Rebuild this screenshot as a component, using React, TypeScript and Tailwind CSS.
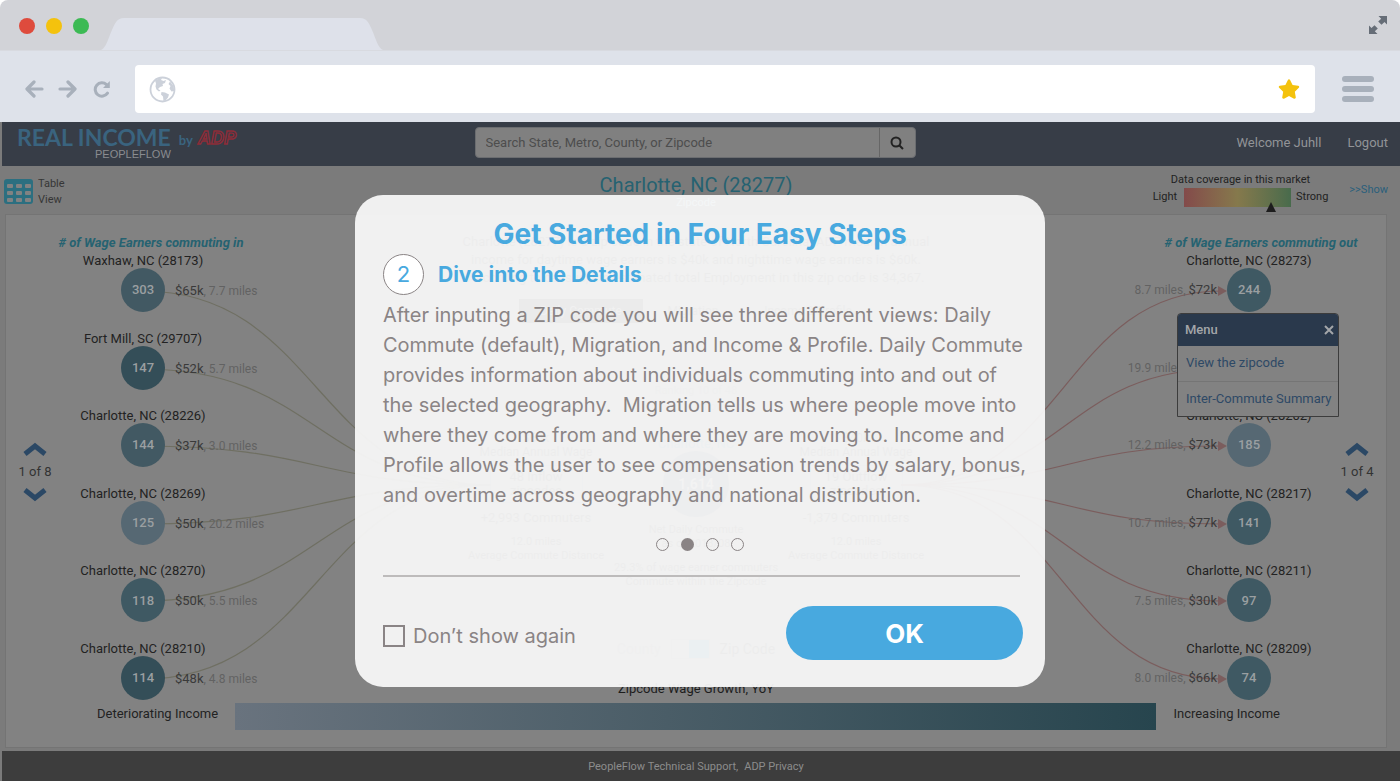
import { useState } from "react";
import type { ReactNode } from "react";
import { FaStar } from "react-icons/fa";

interface Flow {
  place: string;
  count: number;
  pay: string;
  miles: string;
  fill: string;
}

const inflow: Flow[] = [
  { place: "Waxhaw, NC (28173)", count: 303, pay: "$65k", miles: "7.7 miles", fill: "bg-[#425963]" },
  { place: "Fort Mill, SC (29707)", count: 147, pay: "$52k", miles: "5.7 miles", fill: "bg-[#344e58]" },
  { place: "Charlotte, NC (28226)", count: 144, pay: "$37k", miles: "3.0 miles", fill: "bg-[#425963]" },
  { place: "Charlotte, NC (28269)", count: 125, pay: "$50k", miles: "20.2 miles", fill: "bg-[#566873]" },
  { place: "Charlotte, NC (28270)", count: 118, pay: "$50k", miles: "5.5 miles", fill: "bg-[#3f5963]" },
  { place: "Charlotte, NC (28210)", count: 114, pay: "$48k", miles: "4.8 miles", fill: "bg-[#344e58]" },
];

const outflow: Flow[] = [
  { place: "Charlotte, NC (28273)", count: 244, pay: "$72k", miles: "8.7 miles", fill: "bg-[#3f5963]" },
  { place: "Charlotte, NC (28205)", count: 201, pay: "$61k", miles: "19.9 miles", fill: "bg-[#425963]" },
  { place: "Charlotte, NC (28202)", count: 185, pay: "$73k", miles: "12.2 miles", fill: "bg-[#566873]" },
  { place: "Charlotte, NC (28217)", count: 141, pay: "$77k", miles: "10.7 miles", fill: "bg-[#3f5963]" },
  { place: "Charlotte, NC (28211)", count: 97, pay: "$30k", miles: "7.5 miles", fill: "bg-[#3f5963]" },
  { place: "Charlotte, NC (28209)", count: 74, pay: "$66k", miles: "8.0 miles", fill: "bg-[#3f5963]" },
];

const rowY = [36, 114, 191, 269, 346, 424];
const hubY = 230;

const steps = ["Search", "Dive into the Details", "Compare", "Share"];

const bodyLines = [
  "After inputing a ZIP code you will see three different views: Daily",
  "Commute (default), Migration, and Income & Profile. Daily Commute",
  "provides information about individuals commuting into and out of",
  "the selected geography.  Migration tells us where people move into",
  "where they come from and where they are moving to. Income and",
  "Profile allows the user to see compensation trends by salary, bonus,",
  "and overtime across geography and national distribution.",
];

function BrowserChrome() {
  return (
    <div className="bg-white">
      <div className="flex h-[51px] items-center rounded-t-lg border-b border-[#d8dae0] bg-[#d2d3d8] pl-[19px] pr-3">
        <div className="flex gap-[11px] pt-px">
          <span className="size-4 rounded-full bg-[#de4b3d]" />
          <span className="size-4 rounded-full bg-[#f4c20d]" />
          <span className="size-4 rounded-full bg-[#3cba54]" />
        </div>
        <svg className="ml-3 self-end" width="282" height="32" viewBox="0 0 282 32">
          <path d="M0 32 C5 30 7 21 11 12 C14 5 16 0 23 0 L259 0 C266 0 268 5 271 12 C275 21 277 30 282 32 Z" fill="#dee1ea" />
        </svg>
        <button aria-label="Full screen" className="ml-auto">
          <svg width="20" height="20" viewBox="0 0 20 20" fill="#666d77">
            <path d="M10.500 1 H19 V9.500 L16.500 7 L13.500 9.800 L10.200 6.600 L13.200 3.700 Z" />
            <path d="M9.500 19 H1 V10.500 L3.500 13 L6.500 10.200 L9.800 13.400 L6.800 16.300 Z" />
          </svg>
        </button>
      </div>
      <div className="flex h-[71px] items-center bg-[#dee2ea] pb-[9px] pl-[25px] pr-[26px] pt-[14px]">
        <div className="flex items-center gap-3.5 text-[#a8b0bb]">
          <button aria-label="Back">
            <svg width="19" height="18" viewBox="0 0 19 18" fill="none" stroke="currentColor" strokeWidth="3.200" strokeLinecap="round" strokeLinejoin="round">
              <path d="M17 9 H2.500 M9 2 L2 9 L9 16" />
            </svg>
          </button>
          <button aria-label="Forward">
            <svg width="19" height="18" viewBox="0 0 19 18" fill="none" stroke="currentColor" strokeWidth="3.200" strokeLinecap="round" strokeLinejoin="round">
              <path d="M2 9 H16.500 M10 2 L17 9 L10 16" />
            </svg>
          </button>
          <button aria-label="Reload" className="ml-0.5">
            <svg width="18" height="18" viewBox="0 0 18 18" fill="none" stroke="currentColor" strokeWidth="3" strokeLinecap="round">
              <path d="M13.500 4.600 A6.700 6.700 0 1 0 14.500 13.200" />
              <path d="M16.800 1 V8 H10 Z" fill="currentColor" stroke="none" />
            </svg>
          </button>
        </div>
        <div className="ml-6 flex h-12 flex-1 items-center rounded bg-white pl-3.5 pr-[15px]">
          <svg width="27" height="27" viewBox="0 0 27 27" className="shrink-0">
            <circle cx="13.500" cy="13.500" r="12" fill="#fff" stroke="#ccd1da" strokeWidth="1.800" />
            <path d="M6 4.500 L10 2.500 L13 2 L12 4 L14.500 5 L17 4 L16 7 L13.500 8 L14 10 L11 11 L9 13 L11.500 14.500 L10 15.500 L7.500 13.500 L6.500 10.500 L7 7.500 Z" fill="#ccd1da" />
            <path d="M12.500 16 L16 16.500 L20 18.500 L19 21.500 L16.500 24.500 L14.500 25 L14 20.500 L12 18.500 Z" fill="#ccd1da" />
            <path d="M21 5.500 L24.500 10 L25.300 15 L22.500 15.500 L20.500 12.500 L21.500 10 L19.500 8 Z" fill="#ccd1da" />
          </svg>
          <input aria-label="Address" className="h-full min-w-0 flex-1 px-3 text-[16px] outline-none" />
          <button aria-label="Bookmark" className="text-[#f4c20d]">
            <FaStar size={22} />
          </button>
        </div>
        <button aria-label="Browser menu" className="ml-[27px] flex w-8 flex-col gap-1">
          <span className="h-1.5 rounded-full bg-[#a8b0bb]" />
          <span className="h-1.5 rounded-full bg-[#a8b0bb]" />
          <span className="h-1.5 rounded-full bg-[#a8b0bb]" />
        </button>
      </div>
    </div>
  );
}

function SiteHeader() {
  return (
    <header className="flex h-11 items-center bg-[#373d47] pb-[3px] pr-3">
      <div className="flex-1">
        <div className="flex items-start pl-[15px]">
          <div className="flex flex-col items-end">
            <span className="font-['Lato'] text-[23px] font-bold leading-[22px] text-[#3a647f]">REAL INCOME</span>
            <span className="font-['Liberation_Sans'] text-[11px] leading-3 text-[#8a8c90]">PEOPLEFLOW</span>
          </div>
          <span className="ml-2 mt-1 font-['Lato'] text-[13px] font-bold leading-5 text-[#3a647f]">by</span>
          <svg className="ml-1" width="42" height="22" viewBox="0 0 42 22">
            <text x="1" y="18" fontFamily="Liberation Sans" fontSize="18" fontWeight="700" fontStyle="italic" fill="#373d47" stroke="#8c2c38" strokeWidth="1.400">ADP</text>
          </svg>
        </div>
      </div>
      <form className="flex h-[31px] w-[441px] rounded border border-[#6b6d70] bg-[#808080]" onSubmit={(e) => e.preventDefault()}>
        <input
          aria-label="Search"
          placeholder="Search State, Metro, County, or Zipcode"
          className="min-w-0 flex-1 bg-transparent px-2.5 text-[13px] text-[#222] outline-none placeholder:text-[#4d4d4d]"
        />
        <button aria-label="Run search" className="flex w-9 items-center justify-center border-l border-[#666]">
          <svg width="14" height="14" viewBox="0 0 14 14" fill="none" stroke="#222" strokeWidth="2">
            <circle cx="6" cy="6" r="4.500" />
            <path d="M9.200 9.200 L13 13" />
          </svg>
        </button>
      </form>
      <div className="flex flex-1 justify-end gap-[26px] text-[13px] text-[#929497]">
        <span>Welcome Juhll</span>
        <a href="#logout">Logout</a>
      </div>
    </header>
  );
}

function SubHeader() {
  return (
    <div className="flex h-12 pl-0.5 pr-3">
      <div className="flex flex-1 items-center gap-[5px] pt-1">
        <svg width="29" height="26" viewBox="0 0 29 26">
          <rect width="29" height="25" rx="3" fill="#2c6f80" />
          <g fill="#828282">
            <rect x="3" y="5" width="6" height="4" rx="1" />
            <rect x="12" y="5" width="6" height="4" rx="1" />
            <rect x="21" y="5" width="6" height="4" rx="1" />
            <rect x="3" y="12" width="6" height="4" rx="1" />
            <rect x="12" y="12" width="6" height="4" rx="1" />
            <rect x="21" y="12" width="6" height="4" rx="1" />
            <rect x="3" y="19" width="6" height="4" rx="1" />
            <rect x="12" y="19" width="6" height="4" rx="1" />
            <rect x="21" y="19" width="6" height="4" rx="1" />
          </g>
        </svg>
        <a href="#table" className="w-8 text-[11px] leading-4 text-[#363636]">Table View</a>
      </div>
      <div className="pt-2 text-center">
        <h1 className="text-[20px] leading-[23px] text-[#266271]">Charlotte, NC (28277)</h1>
        <p className="text-[11px] leading-3 text-[#b4dce4]">Zipcode</p>
      </div>
      <div className="flex flex-1 items-center justify-end gap-[21px] text-[11px] text-[#222]">
        <div className="flex flex-col items-center pb-px">
          <span className="leading-4">Data coverage in this market</span>
          <div className="flex items-center gap-[5px]">
            <span className="mr-0.5">Light</span>
            <div className="relative h-[19px] w-[107px] bg-linear-to-r from-[#834a4a] via-[#85794c] to-[#486b4c]">
              <span className="absolute -bottom-[5px] left-[82px] size-0 border-x-5 border-b-10 border-x-transparent border-b-[#1d1d1d]" />
            </div>
            <span>Strong</span>
          </div>
        </div>
        <a href="#show" className="text-[#2a5f7b]">&gt;&gt;Show</a>
      </div>
    </div>
  );
}

function Pager({ label }: { label: string }) {
  return (
    <div className="flex w-[58px] shrink-0 flex-col items-center gap-1.5 pt-[227px] text-[13px] leading-5 text-[#333]">
      <button aria-label="Previous page">
        <svg width="24" height="14" viewBox="0 0 24 14" fill="none" stroke="#2b4865" strokeWidth="5">
          <path d="M2 12 L12 4 L22 12" />
        </svg>
      </button>
      <span className="whitespace-nowrap">{label}</span>
      <button aria-label="Next page">
        <svg width="24" height="14" viewBox="0 0 24 14" fill="none" stroke="#2b4865" strokeWidth="5">
          <path d="M2 2 L12 10 L22 2" />
        </svg>
      </button>
    </div>
  );
}

function FlowNode({ flow, side, children }: { flow: Flow; side: "in" | "out"; children?: ReactNode }) {
  return (
    <li className="relative flex w-full flex-col items-center">
      <span className="whitespace-nowrap text-[13px] leading-[14px] text-[#222]">{flow.place}</span>
      <div className="grid w-full grid-cols-[minmax(0,1fr)_44px_minmax(0,1fr)] items-center">
        <div className="flex justify-end whitespace-nowrap pr-2.5">
          {side === "out" && (
            <span className="text-[12px] text-[#626262]">
              {flow.miles}, <span className="text-[13px] text-[#3a3a3a]">{flow.pay}</span>
            </span>
          )}
        </div>
        <span className={`flex size-11 items-center justify-center rounded-full text-[13px] font-medium text-[#9a9fa1] ${flow.fill}`}>
          {flow.count}
        </span>
        <div className="whitespace-nowrap pl-2.5">
          {side === "in" && (
            <span className="text-[12px] text-[#626262]">
              <span className="text-[13px] text-[#3a3a3a]">{flow.pay}</span>, {flow.miles}
            </span>
          )}
        </div>
      </div>
      {children}
    </li>
  );
}

function NodeMenu() {
  return (
    <div className="absolute -top-[19px] left-[7px] z-10 w-[162px] rounded-t border border-[#3c3c3c] bg-[#828282] text-[13px]">
      <div className="flex h-8 items-center justify-between rounded-t-[3px] bg-[#2a394c] pl-[7px] pr-1 text-[#a3a6a9]">
        <span className="font-medium">Menu</span>
        <button aria-label="Close menu">
          <svg width="10" height="10" viewBox="0 0 10 10" stroke="currentColor" strokeWidth="2">
            <path d="M1 1 L9 9 M9 1 L1 9" />
          </svg>
        </button>
      </div>
      <a href="#zipcode" className="flex h-9 items-center whitespace-nowrap border-b border-[#757575] pl-2 text-[#2e4966]">View the zipcode</a>
      <a href="#summary" className="flex h-[34px] items-center whitespace-nowrap pl-2 text-[#2e4966]">Inter-Commute Summary</a>
    </div>
  );
}

function FlowColumn({ title, flows, side }: { title: string; flows: Flow[]; side: "in" | "out" }) {
  return (
    <section className="relative flex w-[158px] shrink-0 flex-col items-center pt-5">
      {side === "in" ? (
        <svg className="absolute left-[79px] top-10" width="348" height="460" viewBox="0 0 348 460" fill="none" stroke="#6f6f62" strokeWidth="1.200">
          {rowY.map((y) => (
            <path key={y} d={`M0 ${y} C174 ${y} 174 ${hubY} 348 ${hubY}`} />
          ))}
        </svg>
      ) : (
        <svg className="absolute right-[101px] top-10" width="326" height="460" viewBox="0 0 326 460" fill="none" stroke="#7b5d5d" strokeWidth="1.200">
          {rowY.map((y) => (
            <g key={y}>
              <path d={`M0 ${hubY} C163 ${hubY} 163 ${y} 320 ${y}`} />
              <path d={`M317 ${y - 5} L326 ${y} L317 ${y + 5} Z`} fill="#7b5d5d" stroke="none" />
            </g>
          ))}
        </svg>
      )}
      <h2 className={`whitespace-nowrap text-[13px] font-bold italic leading-4 text-[#266271] ${side === "in" ? "pl-4" : "pl-6"}`}>{title}</h2>
      <ul className="relative mt-[3px] flex h-[446px] w-full flex-col justify-between">
        {flows.map((flow, i) => (
          <FlowNode key={flow.place} flow={flow} side={side}>
            {side === "out" && i === 1 && <NodeMenu />}
          </FlowNode>
        ))}
      </ul>
    </section>
  );
}

function FlowStat({ wage, zips, commuters }: { wage: string; zips: string; commuters: string }) {
  return (
    <div className="flex w-40 flex-col items-center whitespace-nowrap text-[12px] leading-[14px]">
      <span>{wage}</span>
      <span>Median Annual Wage</span>
      <span className="mt-1.5 w-[93px] border border-[#6f7c84] py-1 text-center text-[13px]">
        {zips}
        <br />
        zipcodes
      </span>
      <span className="mt-2 text-[13px]">{commuters} Commuters</span>
      <span className="mt-2.5 text-[11px]">12.0 miles</span>
      <span className="text-[11px]">Average Commute Distance</span>
    </div>
  );
}

function Summary() {
  return (
    <section className="flex min-w-0 flex-1 flex-col items-center pb-[3px] pt-[18px] text-center text-[#3a3a3a]">
      <p className="text-[13px] leading-[18px]">
        Charlotte (28277) is a zip code in the state of North Carolina. ADP median annual
        <br />
        income for daytime wage earners is $40k and nighttime wage earners is $60k.
        <br />
        According to census, the estimated total Employment in this zip code is 34,367.
      </p>
      <div className="mt-3 flex h-6 items-stretch text-[12px] leading-6">
        <button className="w-[124px] bg-[#202020] text-[#8c8c8c]">Daily Commute</button>
        <button className="w-[100px]">Migration</button>
        <button className="w-[130px]">Income &amp; Profile</button>
      </div>
      <p className="mt-[60px] text-[11px] leading-4 text-[#6a6a6a]">
        Ranking 10 of 48
        <br />
        Commute inflow rank
      </p>
      <div className="mt-4 flex">
        <FlowStat wage="$60k" zips="48 Inflow" commuters="+2,993" />
        <div className="flex w-40 flex-col items-center whitespace-nowrap text-[11px] leading-[14px]">
          <span className="mt-1.5 text-[13px] text-[#347586]">Charlotte, NC</span>
          <span className="flex size-[66px] items-center justify-center rounded-full bg-[#46566a] text-[14px] font-bold text-[#a0a0a0]">1,614</span>
          <span className="mt-1.5">Net Daily Commute</span>
          <span>as of 2018/08</span>
          <span className="mt-2.5">29.3% of wage earner commuters</span>
          <span>Commute within the Zipcode</span>
        </div>
        <FlowStat wage="$40k" zips="19 Outflow" commuters="-1,379" />
      </div>
      <div className="mt-auto flex h-5 items-center gap-2.5 text-[14px]">
        <span className="text-[#6c6c6c]">County</span>
        <span className="flex h-5 w-[39px] justify-end border border-[#7a7a7a]">
          <span className="w-5 bg-[#277a9b]" />
        </span>
        <span>Zip Code</span>
      </div>
      <p className="mt-[22px] text-[13px] leading-4 text-[#1d1d1d]">Zipcode Wage Growth, YoY</p>
    </section>
  );
}

function Dialog({ onClose }: { onClose: () => void }) {
  const [hide, setHide] = useState(false);
  return (
    <div
      role="dialog"
      aria-labelledby="dialog-title"
      className="absolute left-1/2 top-[73px] z-20 w-[690px] -translate-x-1/2 rounded-[28px] bg-[#f8f8f8]/94 pb-[27px] pl-7 pr-[22px] pt-6 font-['Inter'] text-[#8a8485]"
    >
      <h2 id="dialog-title" className="pr-1.5 text-center text-[28px] font-bold leading-[30px] text-[#48a9df]">
        Get Started in Four Easy Steps
      </h2>
      <div className="mt-[5px] flex items-center gap-3.5">
        <span className="flex size-[41px] items-center justify-center rounded-full border border-[#8a8485] bg-white text-[22px] text-[#48a9df]">2</span>
        <h3 className="text-[21px] font-bold leading-7 text-[#48a9df]">Dive into the Details</h3>
      </div>
      <p className="mt-[5px] whitespace-pre text-[20px] leading-[30px]">
        {bodyLines.map((line) => (
          <span key={line} className="block">{line}</span>
        ))}
      </p>
      <div className="mt-7 flex justify-center gap-3 pr-1.5">
        {steps.map((step, i) => (
          <button
            key={step}
            aria-label={step}
            className={i === 1 ? "size-[13px] rounded-full bg-[#8a8485]" : "size-[13px] rounded-full border border-[#8a8485]"}
          />
        ))}
      </div>
      <hr className="mr-[3px] mt-6 border-t-2 border-[#bdbbbb]" />
      <div className="mt-[29px] flex items-center justify-between">
        <label className="flex items-center gap-2 pt-1.5 text-[20px] leading-7">
          <input
            type="checkbox"
            checked={hide}
            onChange={(e) => setHide(e.target.checked)}
            className="size-[22px] appearance-none border-2 border-[#8a8485] checked:bg-[#48a9df]"
          />
          Don’t show again
        </label>
        <button onClick={onClose} className="h-[54px] w-[237px] rounded-full bg-[#48a9df] text-[26px] font-bold text-white">
          OK
        </button>
      </div>
    </div>
  );
}

export default function App() {
  const [open, setOpen] = useState(true);

  return (
    <div className="min-h-screen overflow-hidden bg-[#7b7b7b] font-['Roboto',sans-serif]">
      <BrowserChrome />
      <div className="relative pl-0.5">
        <SiteHeader />
        <SubHeader />
        <main className="ml-[3px] mr-[13px] border border-[#747474] bg-[#828282]">
          <div className="flex">
            <Pager label="1 of 8" />
            <FlowColumn title="# of Wage Earners commuting in" flows={inflow} side="in" />
            <Summary />
            <FlowColumn title="# of Wage Earners commuting out" flows={outflow} side="out" />
            <Pager label="1 of 4" />
          </div>
          <div className="mt-[3px] flex items-start pb-[17px] pl-[91px] pr-[106px] text-[13px] leading-[22px] text-[#222]">
            <span>Deteriorating Income</span>
            <div className="mx-[17px] h-[27px] flex-1 bg-linear-to-r from-[#69737e] to-[#27454e]" />
            <span>Increasing Income</span>
          </div>
        </main>
        <footer className="mt-[3px] flex h-8 items-center justify-center gap-1.5 bg-[#3d3d3d] pr-2.5 text-[11px] text-[#8c8c8c]">
          <a href="#support">PeopleFlow Technical Support,</a>
          <a href="#privacy">ADP Privacy</a>
        </footer>
        {open && <Dialog onClose={() => setOpen(false)} />}
      </div>
    </div>
  );
}
